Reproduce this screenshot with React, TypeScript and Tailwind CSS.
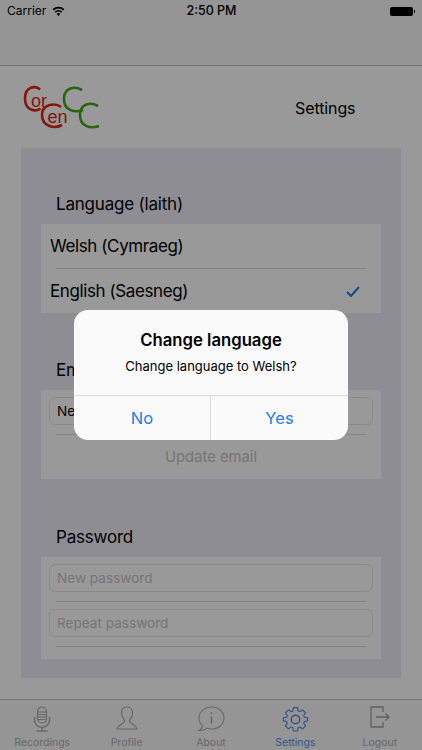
const font = { fontFamily: "Inter, 'Liberation Sans', sans-serif" };

const Logo = () => (
  <svg width="80" height="46" viewBox="0 0 80 46" fill="none">
    <g stroke="#e0260f" strokeWidth="2.6">
      <path d="M17 4.500C13 .5 2 1 2 13.500S13 27 17.500 23.500" />
      <path d="M38 22C33 18 19 18 19 30S32 44 39 40" />
    </g>
    <g stroke="#3fa818" strokeWidth="2.6">
      <path d="M59 5C52 1 41 2 41 14S52 28 60 25" />
      <path d="M75 21C68 17 57 18 57 30S68 44 76 41" />
    </g>
    <text x="8" y="22" fontSize="18" fill="#e0260f" fontFamily="'Liberation Sans', sans-serif">or</text>
    <text x="24.500" y="38" fontSize="18" fill="#e0260f" fontFamily="'Liberation Sans', sans-serif">en</text>
  </svg>
);

const MicIcon = () => (
  <svg width="26" height="26" viewBox="0 0 26 26" fill="none" stroke="#adadad" strokeWidth="1.2">
    <rect x="8.500" y="1" width="9" height="16" rx="4.500" />
    <path d="M9 6h8M9 8.500h8M9 11h8M9 13.500h8" />
    <path d="M5.500 11v3a7.500 7.500 0 0 0 15 0v-3M13 21.500V25M7.500 25h11" strokeWidth="1.500" />
  </svg>
);

const UserIcon = () => (
  <svg width="22" height="24" viewBox="0 0 24 26" fill="none" stroke="#adadad" strokeWidth="1.300">
    <path d="M12 1c-4 0-6 3-6 6.500 0 3 1.300 5.500 2.800 7 .6.800.5 2.500-.3 3.300C6.500 20 2 21 1 25h22c-1-4-5.500-5-7.500-7.200-.8-.8-.9-2.500-.3-3.300 1.500-1.500 2.800-4 2.800-7C18 4 16 1 12 1z" />
  </svg>
);

const InfoIcon = () => (
  <svg width="28" height="26" viewBox="0 0 28 26" fill="none" stroke="#adadad" strokeWidth="1.100">
    <path d="M15 1C7.800 1 2 5.800 2 12c0 3 1.300 5.700 3.500 7.700-.2 2-1.700 4-3.500 4.800 3 .3 6-.6 8-2.300 1.500.5 3.200.8 5 .8 7 0 12-5 12-11S22 1 15 1z" />
    <path d="M14.500 10.500v7" strokeWidth="1.500" />
    <circle cx="14.500" cy="7" r="1" fill="#adadad" stroke="none" />
  </svg>
);

const GearIcon = () => (
  <svg width="27" height="27" viewBox="0 0 24 24" fill="none" stroke="#4d8fe0" strokeWidth="1.150" strokeLinejoin="round">
    <path d="M10 1h4l.6 3.200 1.700.7L19 3.100 21.900 6l-1.800 2.700.7 1.700L24 11v3l-3.200.6-.7 1.700 1.800 2.700L19 21.900l-2.700-1.800-1.700.7L14 24h-4l-.6-3.200-1.700-.7L5 21.900 2.100 19l1.800-2.700-.7-1.700L0 14v-3l3.200-.6.700-1.700L2.100 6 5 3.100l2.700 1.800 1.700-.7z" transform="translate(1.200 .6) scale(.9)" />
    <circle cx="12" cy="12" r="3.800" strokeWidth="1.300" />
  </svg>
);

const LogoutIcon = () => (
  <svg width="20" height="22" viewBox="0 0 20 22" fill="none" stroke="#a0a0a0" strokeWidth="1.300">
    <path d="M13 6V1H1v20h12v-5M6 11h13M15.500 7.500 19 11l-3.500 3.500" />
  </svg>
);

const tabs = [
  { label: "Recordings", icon: <MicIcon /> },
  { label: "Profile", icon: <UserIcon /> },
  { label: "About", icon: <InfoIcon /> },
  { label: "Settings", icon: <GearIcon />, active: true },
  { label: "Logout", icon: <LogoutIcon /> },
];

const Field = ({ text, dark }: { text: string; dark?: boolean }) => (
  <div className="mx-2 h-[28px] rounded-md border border-[#e6e6e6] flex items-center pl-[7px] -mt-px">
    <span className={`text-[13.600px] ${dark ? "text-black" : "text-[#c4c4c6]"}`}>{text}</span>
  </div>
);

const Divider = () => <div className="mx-[15px] h-px bg-[#dcdcdc]" />;

const Section = ({ title, children, className }: { title: string; children: React.ReactNode; className?: string }) => (
  <div className={className}>
    <div className="h-[28px] pl-[15px] text-[17px] tracking-[-0.2px] leading-[28px] text-black">{title}</div>
    <div className="bg-white mt-[6px]">{children}</div>
  </div>
);

export default function App() {
  return (
    <div className="relative w-[422px] h-[750px] overflow-hidden bg-white flex flex-col" style={font}>
      {/* status bar + nav */}
      <div className="h-[66px] bg-[#f8f8f8] border-b border-[#c4c4c4] shrink-0">
        <div className="relative h-[22px] flex items-center justify-between pl-[7px] pr-[7px]">
          <div className="flex items-center gap-[6px] text-[12px] text-black">
            Carrier
            <svg width="13" height="10" viewBox="0 0 13 10" fill="black">
              <path d="M6.500 10 4.600 7.700a3 3 0 0 1 3.800 0zM3.700 6.700 2.700 5.500a6 6 0 0 1 7.600 0L9.300 6.700a4.400 4.400 0 0 0-5.600 0zM1.800 4.400.6 3a9.200 9.200 0 0 1 11.800 0l-1.200 1.400a7.500 7.500 0 0 0-9.400 0z" />
            </svg>
          </div>
          <div className="flex items-center gap-px">
            <div className="w-[23px] h-[9px] rounded-[2px] bg-black" />
            <div className="w-[1px] h-[3px] bg-black" />
          </div>
          <div className="absolute left-[1px] right-0 text-center text-[12.500px] font-medium text-black">2:50 PM</div>
        </div>
      </div>

      {/* logo row */}
      <div className="h-[82px] shrink-0 flex items-start pl-[23px] pt-[19px]">
        <Logo />
        <div className="ml-[192px] mt-[11px] text-[16px] tracking-[-0.1px] text-black">Settings</div>
      </div>

      {/* form panel */}
      <div className="mx-[21px] h-[530px] shrink-0 bg-[#ebebf5] px-[20px] pt-[42px]">
        <Section title="Language (laith)">
          <div className="h-[44px] flex items-center pl-[9px] pt-px text-[17px] tracking-[-0.4px] text-black">Welsh (Cymraeg)</div>
          <Divider />
          <div className="h-[44px] flex items-center justify-between pl-[9px] pt-px pr-[21px] text-[17px] tracking-[-0.4px] text-black">
            English (Saesneg)
            <svg width="14" height="11" viewBox="0 0 14 11" fill="none" stroke="#147efb" strokeWidth="2">
              <path d="M1 6l4 4 8-9" />
            </svg>
          </div>
        </Section>
        <Section title="Email" className="mt-[43px]">
          <div className="pt-[8px]"><Field text="New email" dark /></div>
          <div className="h-[9px]" />
          <Divider />
          <div className="h-[44px] pt-px flex items-center justify-center text-[14.800px] text-[#c4c4c6]">Update email</div>
        </Section>
        <Section title="Password" className="mt-[44px]">
          <div className="pt-[8px]"><Field text="New password" /></div>
          <div className="h-[9px]" />
          <Divider />
          <div className="pt-[8px]"><Field text="Repeat password" /></div>
          <div className="h-[9px]" />
          <Divider />
          <div className="h-[12px]" />
        </Section>
      </div>

      {/* tab bar */}
      <div className="mt-auto h-[51px] shrink-0 bg-[#f8f8f8] border-t border-[#c4c4c4] grid grid-cols-5">
        {tabs.map((t) => (
          <div key={t.label} className="flex flex-col items-center">
            <div className="h-[36px] flex items-start justify-center pt-[6px]">{t.icon}</div>
            <span className={`text-[10.500px] leading-[14px] ${t.active ? "text-[#4d8fe0]" : "text-[#adadad]"}`}>{t.label}</span>
          </div>
        ))}
      </div>

      {/* dim + alert */}
      <div className="absolute inset-0 bg-black/40 flex items-center justify-center">
        <div className="w-[274px] h-[130px] bg-[#fafafa] rounded-[14px] flex flex-col overflow-hidden">
          <div className="h-[85px] flex flex-col items-center pt-[19px]">
            <div className="text-[16.700px] leading-[22px] font-semibold text-black">Change language</div>
            <div className="mt-[6px] text-[13px] leading-[18px] text-black">Change language to Welsh?</div>
          </div>
          <div className="flex-1 grid grid-cols-2 border-t border-[#dcdcdc] text-[16.500px] text-[#1a7ff0]">
            <div className="flex items-center justify-center border-r border-[#dcdcdc]">No</div>
            <div className="flex items-center justify-center">Yes</div>
          </div>
        </div>
      </div>
    </div>
  );
}
